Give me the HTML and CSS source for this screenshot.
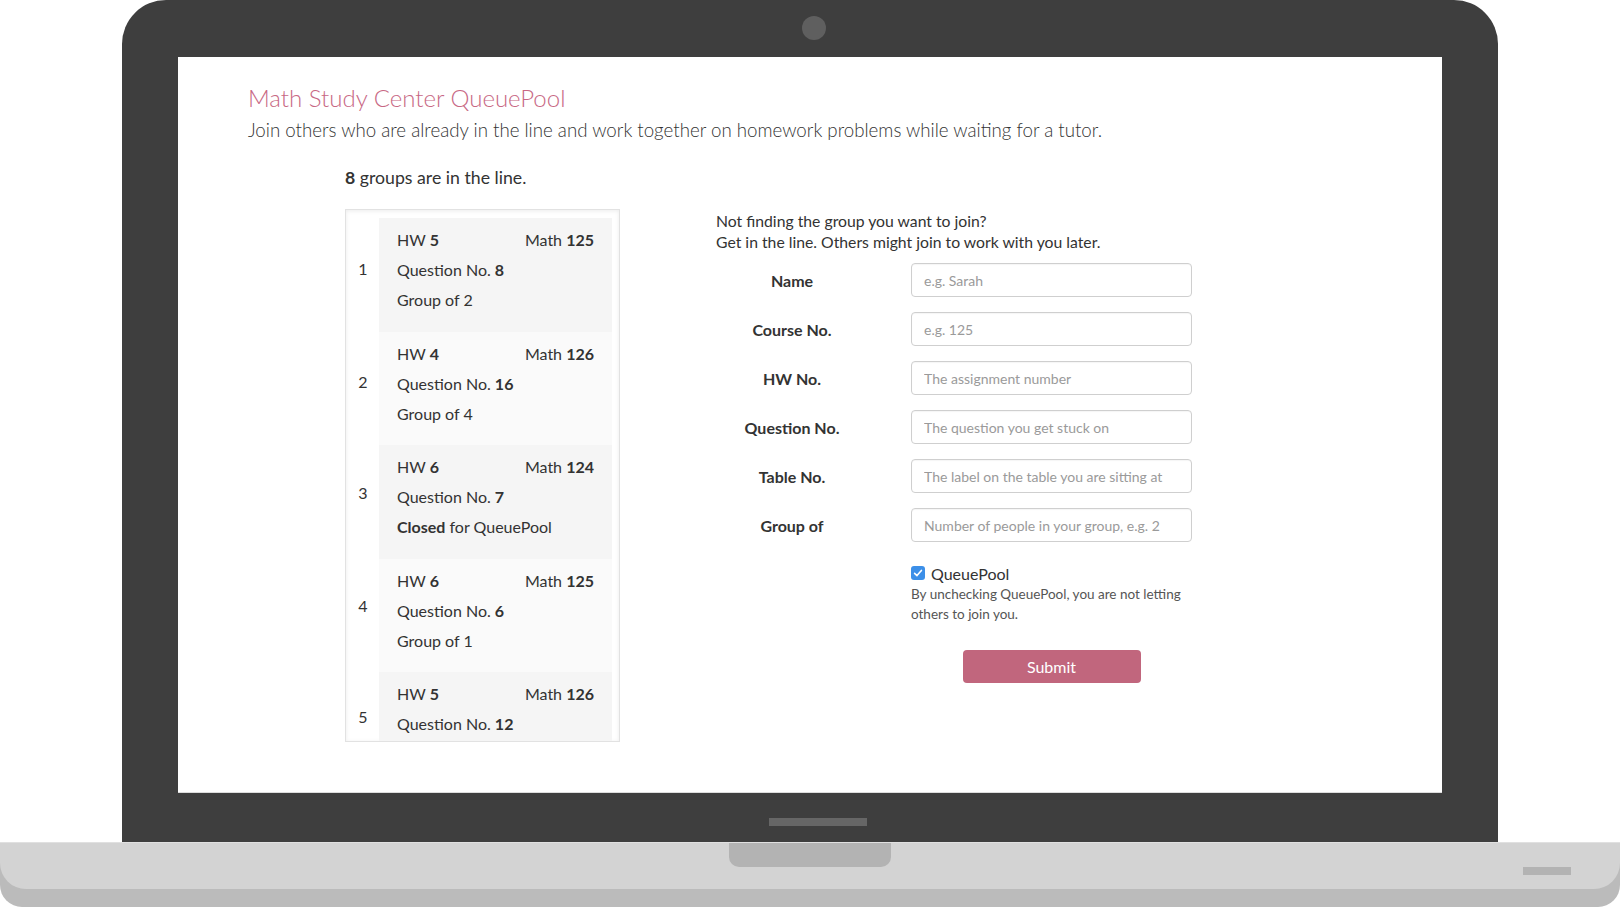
FILE: index.html
```html
<!DOCTYPE html>
<html lang="en">
<head>
<meta charset="utf-8">
<title>Math Study Center QueuePool</title>
<link rel="stylesheet" href="styles.css">
</head>
<body>
<div class="laptop">
  <div class="lid">
    <div class="lid-top"><span class="camera"></span></div>
    <div class="screen">
      <header class="page-head">
        <h1 class="title">Math Study Center QueuePool</h1>
        <p class="subtitle">Join others who are already in the line and work together on homework problems while waiting for a tutor.</p>
      </header>
      <div class="main">
        <section class="queue">
          <p class="queue-count"><b>8</b> groups are in the line.</p>
          <ol class="queue-list">
            <li class="queue-item">
              <span class="pos">1</span>
              <div class="card">
                <div class="card-head"><span>HW <b>5</b></span><span>Math <b>125</b></span></div>
                <div class="card-line">Question No. <b>8</b></div>
                <div class="card-line">Group of 2</div>
              </div>
            </li>
            <li class="queue-item">
              <span class="pos">2</span>
              <div class="card">
                <div class="card-head"><span>HW <b>4</b></span><span>Math <b>126</b></span></div>
                <div class="card-line">Question No. <b>16</b></div>
                <div class="card-line">Group of 4</div>
              </div>
            </li>
            <li class="queue-item">
              <span class="pos">3</span>
              <div class="card">
                <div class="card-head"><span>HW <b>6</b></span><span>Math <b>124</b></span></div>
                <div class="card-line">Question No. <b>7</b></div>
                <div class="card-line"><b>Closed</b> for QueuePool</div>
              </div>
            </li>
            <li class="queue-item">
              <span class="pos">4</span>
              <div class="card">
                <div class="card-head"><span>HW <b>6</b></span><span>Math <b>125</b></span></div>
                <div class="card-line">Question No. <b>6</b></div>
                <div class="card-line">Group of 1</div>
              </div>
            </li>
            <li class="queue-item">
              <span class="pos">5</span>
              <div class="card">
                <div class="card-head"><span>HW <b>5</b></span><span>Math <b>126</b></span></div>
                <div class="card-line">Question No. <b>12</b></div>
                <div class="card-line">Group of 3</div>
              </div>
            </li>
          </ol>
        </section>
        <section class="join">
          <p class="join-intro">Not finding the group you want to join?<br>Get in the line. Others might join to work with you later.</p>
          <form class="join-form">
            <div class="field"><label class="field-label">Name</label><input class="field-input" type="text" placeholder="e.g. Sarah"></div>
            <div class="field"><label class="field-label">Course No.</label><input class="field-input" type="text" placeholder="e.g. 125"></div>
            <div class="field"><label class="field-label">HW No.</label><input class="field-input" type="text" placeholder="The assignment number"></div>
            <div class="field"><label class="field-label">Question No.</label><input class="field-input" type="text" placeholder="The question you get stuck on"></div>
            <div class="field"><label class="field-label">Table No.</label><input class="field-input" type="text" placeholder="The label on the table you are sitting at"></div>
            <div class="field"><label class="field-label">Group of</label><input class="field-input" type="text" placeholder="Number of people in your group, e.g. 2"></div>
            <div class="field-check">
              <span class="label-spacer"></span>
              <div class="check-block">
                <div class="check-line">
                  <span class="checkbox"><svg viewBox="0 0 14 14" width="14" height="14"><path d="M3.6 7.3 L6 9.6 L10.4 4.4" fill="none" stroke="#fff" stroke-width="1.6" stroke-linecap="round" stroke-linejoin="round"/></svg></span>
                  <span class="check-text">QueuePool</span>
                </div>
                <p class="check-help">By unchecking QueuePool, you are not letting others to join you.</p>
              </div>
            </div>
            <div class="submit-row">
              <span class="label-spacer"></span>
              <div class="submit-wrap"><button class="submit" type="button">Submit</button></div>
            </div>
          </form>
        </section>
      </div>
    </div>
    <div class="lid-bottom"><span class="lid-bar"></span></div>
  </div>
  <div class="base">
    <div class="base-top"><span class="notch"></span><span class="slot"></span></div>
  </div>
</div>
</body>
</html>
```

FILE: styles.css
```css
* { box-sizing: border-box; }
html, body { margin: 0; padding: 0; background: #fff; }
body {
  font-family: Lato, "Open Sans", "Liberation Sans", sans-serif;
  color: #333;
  width: 1620px;
  height: 908px;
  overflow: hidden;
}
.laptop { width: 1620px; }

/* lid */
.lid {
  margin-left: 122px;
  width: 1376px;
  height: 842px;
  background: #3e3e3e;
  border-radius: 44px 44px 0 0;
  display: flex;
  flex-direction: column;
  align-items: center;
}
.lid-top {
  height: 57px;
  display: flex;
  align-items: center;
  justify-content: center;
  width: 100%;
}
.camera {
  width: 24px;
  height: 24px;
  border-radius: 50%;
  background: #5f5f5f;
  margin-left: 8px;
  margin-top: -1px;
}
.screen {
  width: 1264px;
  height: 736px;
  background: #fff;
  padding: 27px 70px 0 70px;
  box-shadow: inset 0 -1px 0 #dcdcdc;
  overflow: hidden;
}
.lid-bottom {
  height: 49px;
  width: 100%;
  display: flex;
  justify-content: center;
  padding-top: 25px;
}
.lid-bar {
  width: 98px;
  height: 8px;
  background: #666;
  margin-left: 16px;
}

/* base */
.base {
  height: 65px;
  width: 1620px;
  background: #bbbbbb;
  border-radius: 0 0 22px 22px;
}
.base-top {
  position: relative;
  height: 47px;
  background: #d3d3d3;
  border-top: 1px solid #e0e0e0;
  border-radius: 0 0 26px 26px;
  display: flex;
  justify-content: center;
}
.notch {
  width: 162px;
  height: 24px;
  background: #b3b3b3;
  border-radius: 0 0 10px 10px;
}
.slot {
  position: absolute;
  right: 49px;
  top: 24px;
  width: 48px;
  height: 8px;
  background: #b3b3b3;
}

/* page header */
.title {
  margin: 0;
  font-size: 24px;
  line-height: 28px;
  font-weight: 300;
  color: #c86884;
}
.subtitle {
  margin: 5px 0 0 0;
  font-size: 18.7px;
  line-height: 26px;
  font-weight: 300;
  color: #333;
}

/* main */
.main {
  display: flex;
  align-items: flex-start;
  padding-left: 97px;
  margin-top: 24px;
}
.queue { width: 275px; }
.queue-count {
  margin: 0;
  font-size: 17.7px;
  line-height: 22px;
}
.queue-list {
  list-style: none;
  margin: 20px 0 0 0;
  padding: 8px 7px 0 0;
  height: 533px;
  overflow: hidden;
  border: 1px solid #e2e2e2;
  box-shadow: inset 0 1px 4px rgba(0,0,0,0.08);
}
.queue-item {
  display: flex;
  align-items: center;
}
.queue-item:nth-child(odd) .card { background: #f5f5f5; }
.queue-item:nth-child(even) .card { background: #fafafa; }
.pos {
  width: 33px;
  text-align: center;
  font-size: 16px;
  padding-left: 1px;
  padding-bottom: 12px;
}
.queue-item:nth-child(2) .pos { padding-bottom: 14px; }
.queue-item:nth-child(3) .pos { padding-bottom: 18px; }
.queue-item:nth-child(4) .pos { padding-bottom: 20px; }
.queue-item:nth-child(5) .pos { padding-bottom: 24px; }
.card {
  flex: 1;
  padding: 7px 18px 16.5px 18px;
  font-size: 16px;
  line-height: 30px;
}
.card-head {
  display: flex;
  justify-content: space-between;
}

/* join form */
.join {
  margin-left: 96px;
  width: 476px;
  margin-top: 43px;
}
.join-intro {
  margin: 0;
  font-size: 15.75px;
  line-height: 21px;
}
.join-form { margin-top: 11px; }
.field {
  display: flex;
  align-items: center;
  height: 34px;
  margin-bottom: 15px;
}
.field-label, .label-spacer {
  width: 152px;
  flex: none;
}
.field-label {
  text-align: center;
  font-weight: 700;
  font-size: 16px;
}
.field-input {
  margin-left: 43px;
  width: 281px;
  height: 34px;
  border: 1px solid #cfcfcf;
  border-radius: 4px;
  padding: 0 12px;
  font-family: inherit;
  font-size: 14px;
  color: #555;
  box-shadow: inset 0 1px 1px rgba(0,0,0,0.04);
}
.field-input::placeholder { color: #9a9a9a; }

.field-check {
  display: flex;
  margin-top: 20px;
}
.check-block {
  margin-left: 43px;
  width: 281px;
}
.check-line {
  display: flex;
  align-items: center;
  height: 22px;
}
.checkbox {
  width: 14px;
  height: 14px;
  border-radius: 3px;
  background: #3c8fe8;
  display: flex;
  margin-right: 6px;
}
.check-text { font-size: 16px; }
.check-help {
  margin: 0;
  font-size: 13.5px;
  line-height: 20px;
  color: #555;
}
.submit-row {
  display: flex;
  margin-top: 26px;
}
.submit-wrap {
  margin-left: 43px;
  width: 281px;
  display: flex;
  justify-content: center;
}
.submit {
  width: 178px;
  height: 33px;
  border: none;
  border-radius: 4px;
  background: #c1667d;
  color: #fff;
  font-family: inherit;
  font-size: 16px;
  padding: 0;
}
```
